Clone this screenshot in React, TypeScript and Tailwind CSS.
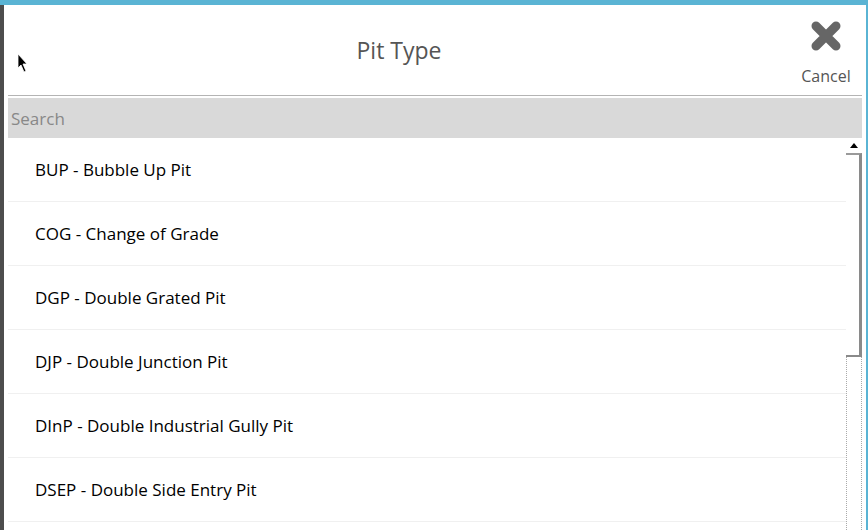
import React from "react";

const items = [
  "BUP - Bubble Up Pit",
  "COG - Change of Grade",
  "DGP - Double Grated Pit",
  "DJP - Double Junction Pit",
  "DInP - Double Industrial Gully Pit",
  "DSEP - Double Side Entry Pit",
];

export default function App() {
  return (
    <div
      className="w-[868px] h-[530px] flex flex-col bg-white overflow-hidden"
      style={{ fontFamily: '"Open Sans", "Noto Sans", sans-serif' }}
    >
      <div className="h-[5px] shrink-0 bg-[#5ab4d4]" />
      <div className="flex-1 flex min-h-0">
        <div className="w-[4px] shrink-0 bg-[#4d4d4d]" />
        <div className="w-[4px] shrink-0" />
        <div className="flex-1 flex flex-col min-h-0">
          {/* header */}
          <div className="relative h-[90px] shrink-0 flex">
            <svg
              className="absolute left-[9px] top-[48px]"
              width="12"
              height="20"
              viewBox="0 0 12 20"
            >
              <path d="M1 1 L1 15 L4 12 L7 19 L9 18 L6 11 L10 11 Z" fill="#000" stroke="#fff" strokeWidth="0.8" />
            </svg>
            <div className="flex-1 flex items-center justify-center">
              <span className="text-[23px] text-[#555] leading-none">Pit Type</span>
            </div>
            <div className="w-[72px] flex flex-col items-center pt-[15px]">
              <svg width="32" height="32" viewBox="0 0 32 32">
                <path d="M6 6 L26 26 M26 6 L6 26" stroke="#666" strokeWidth="9" strokeLinecap="round" />
              </svg>
              <span className="mt-[16px] text-[16px] text-[#555] leading-none">Cancel</span>
            </div>
          </div>
          <div className="h-px shrink-0 bg-[#b4b4b4]" />
          <div className="h-[2px] shrink-0" />
          <div className="h-[40px] shrink-0 bg-[#d9d9d9] flex items-center pl-[3px] pt-[1px]">
            <span className="text-[17px] text-[#888]">Search</span>
          </div>
          {/* list */}
          <div className="flex-1 flex min-h-0">
            <div className="flex-1 flex flex-col min-w-0">
              {items.map((t) => (
                <div
                  key={t}
                  className="h-[64px] shrink-0 border-b border-[#f0f0f0] flex items-center pl-[27px]"
                >
                  <span className="text-[17px] text-black">{t}</span>
                </div>
              ))}
            </div>
            {/* scrollbar */}
            <div className="w-[16px] shrink-0 flex flex-col">
              <div className="h-[15px] shrink-0 flex items-center justify-center">
                <svg width="8" height="5" viewBox="0 0 8 5">
                  <path d="M0 5 L4 0 L8 5 Z" fill="#000" />
                </svg>
              </div>
              <div className="h-[204px] shrink-0 border-t-[2px] border-t-[#9a9a9a] border-r-[3px] border-r-[#8a8a8a] border-b-[2px] border-b-[#8a8a8a] bg-white" />
              <div className="flex-1 border-l border-r border-dotted border-[#aaa]" />
            </div>
          </div>
        </div>
        <div className="w-[4px] shrink-0" />
        <div className="w-[2px] shrink-0 bg-[#5ab4d4]" />
      </div>
    </div>
  );
}
